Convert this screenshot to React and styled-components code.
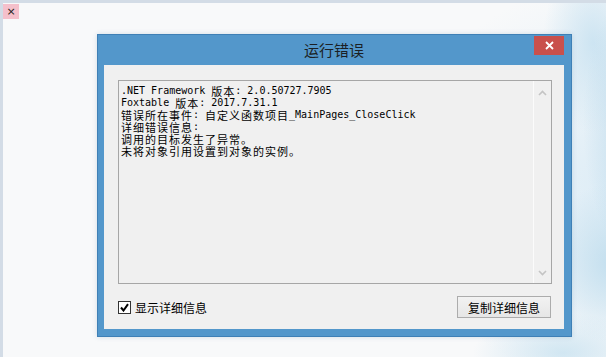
import React from "react";
import styled, { createGlobalStyle } from "styled-components";

const Global = createGlobalStyle`
  html, body { margin: 0; padding: 0; }
  body { width: 606px; height: 357px; overflow: hidden; background: #f8f9fa; }
`;

const Desktop = styled.div`
  position: relative;
  width: 606px;
  height: 357px;
  overflow: hidden;
  box-sizing: border-box;
  border-top: 3px solid #d3dce6;
  border-left: 3px solid #d3dce6;
  background:
    radial-gradient(ellipse 60px 140px at 640px 120px, rgba(170, 208, 230, 0.75), rgba(170, 208, 230, 0) 100%),
    radial-gradient(ellipse 50px 90px at 590px 40px, rgba(196, 224, 240, 0.8), rgba(196, 224, 240, 0) 100%),
    radial-gradient(ellipse 70px 80px at 610px 260px, rgba(185, 218, 236, 0.8), rgba(185, 218, 236, 0) 100%),
    radial-gradient(ellipse 90px 40px at 560px 350px, rgba(200, 226, 240, 0.8), rgba(200, 226, 240, 0) 100%),
    radial-gradient(ellipse 200px 200px at 600px 180px, rgba(220, 236, 246, 0.9), rgba(220, 236, 246, 0) 100%),
    #f8f9fa;
  font-family: "Noto Sans CJK SC", "Liberation Sans", sans-serif;
`;

const TabClose = styled.div`
  position: absolute;
  left: 0;
  top: 1px;
  width: 16px;
  height: 15px;
  background: #f5c0cb;
  color: #222;
  font: 11px/15px "DejaVu Sans", sans-serif;
  text-align: center;
`;

const Window = styled.div`
  position: absolute;
  left: 94px;
  top: 31px;
  width: 475px;
  height: 303px;
  box-sizing: border-box;
  border: 1px solid #3f80b6;
  background: #5397cb;
  padding: 0 7px 7px 6px;
  display: flex;
  flex-direction: column;
  box-shadow: 0 0 5px rgba(60, 110, 150, 0.2);
`;

const TitleBar = styled.div`
  height: 30px;
  flex: none;
  display: grid;
  grid-template-columns: 1fr auto 1fr;
  align-items: center;
`;

const Title = styled.div`
  grid-column: 2;
  font-size: 15px;
  line-height: 18px;
  color: #1b1f24;
`;

const CloseButton = styled.div`
  grid-column: 3;
  justify-self: end;
  align-self: start;
  margin-top: 1px;
  width: 30px;
  height: 19px;
  background: #c9504c;
  display: flex;
  align-items: center;
  justify-content: center;
`;

const Panel = styled.div`
  flex: 1;
  background: #f0f0f0;
  padding: 15px 12px 0 14px;
  display: flex;
  flex-direction: column;
`;

const TextBox = styled.div`
  width: 434px;
  height: 204px;
  box-sizing: border-box;
  border: 1px solid #a6a6a6;
  background: #f0f0f0;
  display: flex;
`;

const Content = styled.div`
  flex: 1;
  padding: 4px 0 0 2px;
  color: #000;
`;

const Line = styled.div`
  height: 12px;
  line-height: 12px;
  white-space: pre;
  display: flex;
  align-items: center;
`;

const Seg = styled.span`
  display: inline-block;
  height: 12px;
  line-height: 12px;
  font-family: ${(p) => (p.$cjk ? `"Noto Sans CJK SC", sans-serif` : `"DejaVu Sans Mono", monospace`)};
  font-size: ${(p) => (p.$cjk ? "11px" : "10px")};
  letter-spacing: ${(p) => (p.$cjk ? "1px" : "0")};
`;

const ScrollBar = styled.div`
  width: 17px;
  flex: none;
  border-left: 1px solid #fbfbfb;
  display: flex;
  flex-direction: column;
  justify-content: space-between;
  align-items: center;
  padding: 9px 0 7px;
`;

const Footer = styled.div`
  margin-top: 12px;
  width: 434px;
  display: flex;
  align-items: center;
  justify-content: space-between;
`;

const CheckLabel = styled.label`
  display: flex;
  align-items: center;
  gap: 4px;
  font-size: 12px;
  color: #000;
  margin-top: 1px;
`;

const Box = styled.span`
  width: 11px;
  height: 11px;
  border: 1px solid #333;
  background: #fff;
  display: flex;
  align-items: center;
  justify-content: center;
`;

const Button = styled.div`
  width: 94px;
  height: 22px;
  box-sizing: border-box;
  margin-right: 1px;
  border: 1px solid #acacac;
  background: linear-gradient(#f2f2f2, #e6e6e6);
  font-size: 12px;
  color: #000;
  display: flex;
  align-items: center;
  justify-content: center;
`;

const Chevron = ({ up }) => (
  <svg width="9" height="6" viewBox="0 0 9 6">
    <path
      d={up ? "M1 5 L4.5 1.5 L8 5" : "M1 1 L4.5 4.5 L8 1"}
      fill="none"
      stroke="#c4c4c4"
      strokeWidth="1.6"
    />
  </svg>
);

const lines = [
  [[".NET Framework ", 0], ["版本", 1], [": 2.0.50727.7905", 0]],
  [["Foxtable ", 0], ["版本", 1], [": 2017.7.31.1", 0]],
  [["错误所在事件", 1], [": ", 0], ["自定义函数项目", 1], ["_MainPages_CloseClick", 0]],
  [["详细错误信息", 1], [":", 0]],
  [["调用的目标发生了异常。", 1]],
  [["未将对象引用设置到对象的实例。", 1]],
];

export default function App() {
  return (
    <Desktop>
      <Global />
      <TabClose>×</TabClose>
      <Window>
        <TitleBar>
          <Title>运行错误</Title>
          <CloseButton>
            <svg width="9" height="9" viewBox="0 0 9 9">
              <path d="M1 1 L8 8 M8 1 L1 8" stroke="#fff" strokeWidth="1.8" />
            </svg>
          </CloseButton>
        </TitleBar>
        <Panel>
          <TextBox>
            <Content>
              {lines.map((segs, i) => (
                <Line key={i}>
                  {segs.map(([t, c], j) => (
                    <Seg key={j} $cjk={!!c}>
                      {t}
                    </Seg>
                  ))}
                </Line>
              ))}
            </Content>
            <ScrollBar>
              <Chevron up />
              <Chevron />
            </ScrollBar>
          </TextBox>
          <Footer>
            <CheckLabel>
              <Box>
                <svg width="9" height="9" viewBox="0 0 9 9">
                  <path d="M1 4.5 L3.5 7.5 L8 1.2" fill="none" stroke="#000" strokeWidth="2" />
                </svg>
              </Box>
              显示详细信息
            </CheckLabel>
            <Button>复制详细信息</Button>
          </Footer>
        </Panel>
      </Window>
    </Desktop>
  );
}
